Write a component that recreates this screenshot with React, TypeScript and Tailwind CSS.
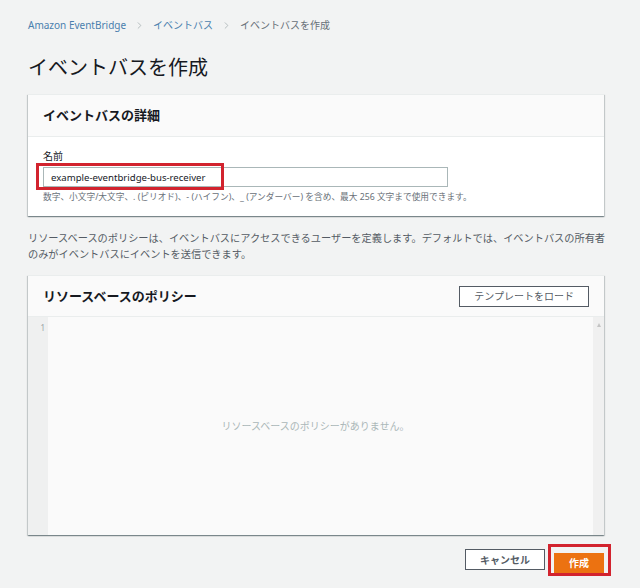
import React from 'react';
import { ChevronRight } from 'lucide-react';

const font = { fontFamily: '"Noto Sans", "Noto Sans CJK JP", sans-serif' };

const Breadcrumb: React.FC = () => (
  <nav className="flex items-center h-[14px] text-[10px] leading-[14px]">
    <span className="text-[#4a7fae]">Amazon EventBridge</span>
    <ChevronRight className="w-[11px] h-[11px] mx-[8px] text-[#9aa5a8]" strokeWidth={1.5} />
    <span className="text-[#4a7fae]">イベントバス</span>
    <ChevronRight className="w-[11px] h-[11px] mx-[8px] text-[#9aa5a8]" strokeWidth={1.5} />
    <span className="text-[#687078]">イベントバスを作成</span>
  </nav>
);

const cardShadow =
  'shadow-[0_1px_1px_0_rgba(0,28,36,0.3),1px_1px_1px_0_rgba(0,28,36,0.15),-1px_1px_1px_0_rgba(0,28,36,0.15)]';

const App: React.FC = () => {
  return (
    <div style={font} className="min-h-[588px] bg-[#f2f3f3] pl-[28px] pr-[36px] pt-[18px] text-[#16191f]">
      <Breadcrumb />

      <h1 className="mt-[22px] text-[20px] leading-[28px] font-normal text-[#16191f]">イベントバスを作成</h1>

      <section className={`mt-[12px] bg-white border-t border-[#eaeded] ${cardShadow}`}>
        <div className="h-[42px] flex items-center px-[15px] bg-[#fafafa] border-b border-[#eaeded]">
          <h2 className="text-[13px] font-bold leading-none">イベントバスの詳細</h2>
        </div>
        <div className="px-[15px] pt-[12px] pb-[13px]">
          <label className="block text-[10px] leading-[14px] text-[#16191f]">名前</label>
          <div className="relative mt-[4px] w-[405px]">
            <input
              readOnly
              value="example-eventbridge-bus-receiver"
              className="block w-full h-[20px] border border-[#aab7b8] bg-white pl-[7px] text-[9.6px] text-[#16191f] outline-none"
              style={font}
            />
            <div className="absolute left-[-7px] top-[-4px] w-[188px] h-[27px] border-[3px] border-[#d2232e] pointer-events-none" />
          </div>
          <p className="mt-[4px] text-[8.7px] leading-[12px] text-[#687078] whitespace-nowrap">
            数字、小文字/大文字、. (ピリオド)、- (ハイフン)、_ (アンダーバー) を含め、最大 256 文字まで使用できます。
          </p>
        </div>
      </section>

      <p className="mt-[14px] text-[10.2px] leading-[16px] text-[#545b64] whitespace-nowrap">
        リソースベースのポリシーは、イベントバスにアクセスできるユーザーを定義します。デフォルトでは、イベントバスの所有者
        <br />
        のみがイベントバスにイベントを送信できます。
      </p>

      <section className={`mt-[13px] bg-white border-t border-[#eaeded] ${cardShadow}`}>
        <div className="h-[41px] flex items-center justify-between pl-[15px] pr-[15px] bg-[#fafafa] border-b border-[#eaeded]">
          <h2 className="text-[13px] font-bold leading-none">リソースベースのポリシー</h2>
          <button className="h-[21px] px-[14px] border border-[#545b64] bg-white text-[10px] text-[#545b64] leading-none">
            テンプレートをロード
          </button>
        </div>
        <div className="flex h-[218px] bg-[#fafafa]">
          <div className="w-[20px] bg-[#eff0f0] text-[8px] text-[#9aa3a6] text-right pr-[3px] pt-[5px] leading-[12px]">1</div>
          <div className="flex-1 flex items-center justify-center pr-[10px]">
            <span className="text-[10px] text-[#aab7b8]">リソースベースのポリシーがありません。</span>
          </div>
          <div className="w-[11px] bg-[#f0f0f0] flex justify-center pt-[6px]">
            <div className="w-0 h-0 border-l-[2.5px] border-r-[2.5px] border-b-[4px] border-l-transparent border-r-transparent border-b-[#c4c4c4]" />
          </div>
        </div>
      </section>

      <div className="mt-[14px] flex justify-end gap-[9px]">
        <button className="h-[21px] w-[80px] border border-[#545b64] bg-white text-[10px] font-bold text-[#545b64] leading-none">
          キャンセル
        </button>
        <div className="relative">
          <button className="h-[21px] w-[50px] bg-[#ec7211] text-[10px] font-bold text-white leading-none">作成</button>
          <div className="absolute left-[-6px] top-[-5px] w-[63px] h-[32px] border-[3px] border-[#d2232e] pointer-events-none" />
        </div>
      </div>
    </div>
  );
};

export default App;
